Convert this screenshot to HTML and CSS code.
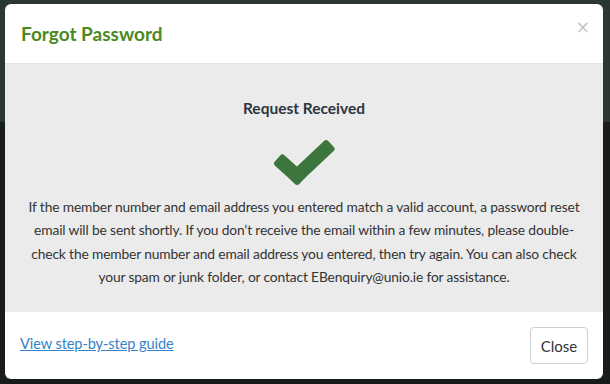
FILE: index.html
```html
<!DOCTYPE html>
<html lang="en">
<head>
<meta charset="utf-8">
<title>Forgot Password</title>
<link rel="stylesheet" href="styles.css">
</head>
<body>
<div class="backdrop">
  <div class="modal">
    <div class="modal-header">
      <h4 class="modal-title">Forgot Password</h4>
      <button class="close" type="button">×</button>
    </div>
    <div class="modal-body">
      <h5 class="status">Request Received</h5>
      <svg class="check" width="62" height="48" viewBox="0 0 62 48">
        <g fill="#3c763d">
          <rect transform="translate(24 37) rotate(-138.1)" x="-7" y="-7" width="33.2" height="14" rx="3"/>
          <rect transform="translate(24 37) rotate(-43.3)" x="-7" y="-7" width="53.7" height="14" rx="3"/>
        </g>
      </svg>
      <p class="message">If the member number and email address you entered match a valid account, a password reset email will be sent shortly. If you don’t receive the email within a few minutes, please double-check the member number and email address you entered, then try again. You can also check your spam or junk folder, or contact EBenquiry@unio.ie for assistance.</p>
    </div>
    <div class="modal-footer">
      <a class="guide" href="#">View step-by-step guide</a>
      <button class="btn" type="button">Close</button>
    </div>
  </div>
</div>
</body>
</html>
```

FILE: styles.css
```css
html, body {
  margin: 0;
  padding: 0;
}
body {
  width: 610px;
  height: 384px;
  overflow: hidden;
  font-family: Lato, "Open Sans", sans-serif;
  color: #333;
}
.backdrop {
  width: 610px;
  height: 384px;
  background: linear-gradient(to bottom, #2b3731 0, #2b3731 122px, #181c1a 122px, #181c1a 100%);
  padding: 4px 0 0 5px;
  box-sizing: border-box;
}
.modal {
  width: 598px;
  height: 375px;
  background: #fff;
  border-radius: 6px;
  overflow: hidden;
  display: flex;
  flex-direction: column;
}
.modal-header {
  height: 59px;
  border-bottom: 1px solid #e2e2e2;
  display: flex;
  align-items: center;
  justify-content: space-between;
  padding: 0 13px 0 16px;
  box-sizing: content-box;
}
.modal-title {
  margin: 0;
  font-size: 19px;
  font-weight: 700;
  color: #4b8a1e;
}
.close {
  border: 0;
  background: none;
  padding: 0;
  margin-top: -12px;
  font-family: "DejaVu Sans", sans-serif;
  font-size: 17px;
  line-height: 1;
  color: #c4c4c4;
}
.modal-body {
  flex: 1;
  background: #ebebeb;
  display: flex;
  flex-direction: column;
  align-items: center;
  padding: 34px 15px 0;
}
.status {
  margin: 0;
  font-size: 15.5px;
  font-weight: 700;
  color: #2c3540;
  line-height: 20px;
}
.check {
  display: block;
  margin-top: 21px;
}
.message {
  margin: 8px 0 0;
  max-width: 556px;
  text-align: center;
  font-size: 13.8px;
  letter-spacing: -0.15px;
  line-height: 23.4px;
  color: #333;
}
.modal-footer {
  height: 67px;
  display: flex;
  align-items: center;
  justify-content: space-between;
  padding: 0 15px 0 15px;
}
.guide {
  color: #3583c8;
  font-size: 14.6px;
  letter-spacing: -0.1px;
  text-decoration: underline;
  margin-top: -4px;
}
.btn {
  width: 58px;
  height: 37px;
  border: 1px solid #cfcfcf;
  border-radius: 4px;
  background: #fff;
  font-family: Lato, "Open Sans", sans-serif;
  font-size: 15px;
  color: #333;
  padding: 0;
}
```
